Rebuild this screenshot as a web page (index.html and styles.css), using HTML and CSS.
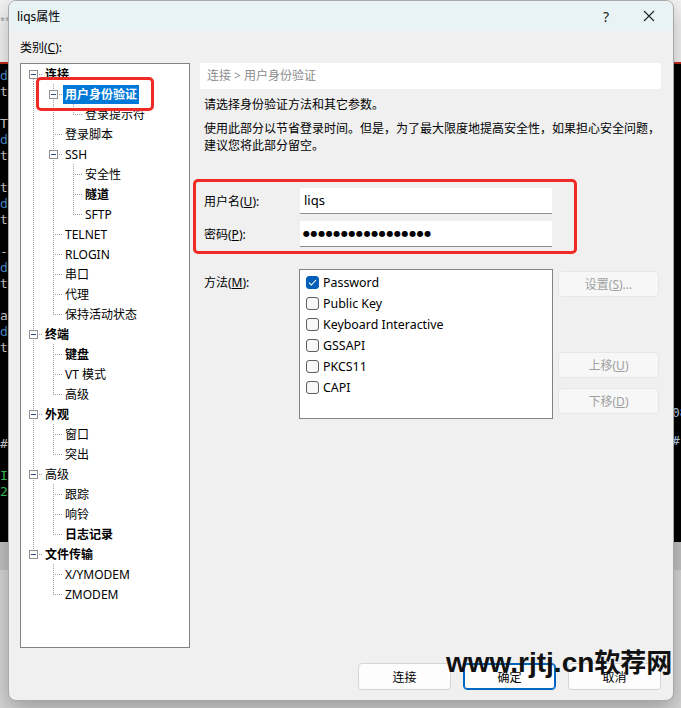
FILE: index.html
```html
<!DOCTYPE html>
<html lang="zh-CN">
<head>
<meta charset="utf-8">
<title>liqs属性</title>
<link rel="stylesheet" href="styles.css">
</head>
<body>
<div class="desktop">
  <div class="app-top"><span class="stars">**</span></div>
  <div class="terminal">
    <div class="term-left">
      <span class="tb">d</span><span class="tw">ta</span><span></span><span class="tw">T</span><span class="tb">d</span><span class="tw">ta</span><span></span><span class="tw">t</span><span class="tb">d</span><span class="tw">ta</span><span></span><span class="tw">-</span><span class="tb">d</span><span class="tw">ta</span><span></span><span class="tw">ar</span><span class="tb">d</span><span class="tw">ta</span><span></span><span></span><span></span><span></span><span></span><span class="tw">#</span><span></span><span class="tg">I</span><span class="tg">2</span>
    </div>
    <div class="term-right"><span class="ty">08</span><span class="ty">#</span></div>
  </div>
  <div class="statusbar"></div>

  <div class="dialog">
    <div class="titlebar">
      <span class="title">liqs属性</span>
      <span class="tb-btns"><span class="help">?</span><svg class="close" width="12" height="12" viewBox="0 0 12 12"><path d="M1 1L11 11M11 1L1 11" stroke="#222" stroke-width="1.1" fill="none"/></svg></span>
    </div>
    <div class="main">
      <div class="left-col">
        <div class="cat-label">类别(<u>C</u>):</div>
        <div class="tree">
          <div class="row"><span class="c x-first"><span class="box"></span></span><span class="lbl b">连接</span></div>
          <div class="row"><span class="c g-v"></span><span class="c x-mid"><span class="box"></span></span><span class="lbl b sel">用户身份验证</span></div>
          <div class="row"><span class="c g-v"></span><span class="c g-v"></span><span class="c g-l"></span><span class="lbl">登录提示符</span></div>
          <div class="row"><span class="c g-v"></span><span class="c g-t"></span><span class="lbl">登录脚本</span></div>
          <div class="row"><span class="c g-v"></span><span class="c x-mid"><span class="box"></span></span><span class="lbl">SSH</span></div>
          <div class="row"><span class="c g-v"></span><span class="c g-v"></span><span class="c g-t"></span><span class="lbl">安全性</span></div>
          <div class="row"><span class="c g-v"></span><span class="c g-v"></span><span class="c g-t"></span><span class="lbl b">隧道</span></div>
          <div class="row"><span class="c g-v"></span><span class="c g-v"></span><span class="c g-l"></span><span class="lbl">SFTP</span></div>
          <div class="row"><span class="c g-v"></span><span class="c g-t"></span><span class="lbl">TELNET</span></div>
          <div class="row"><span class="c g-v"></span><span class="c g-t"></span><span class="lbl">RLOGIN</span></div>
          <div class="row"><span class="c g-v"></span><span class="c g-t"></span><span class="lbl">串口</span></div>
          <div class="row"><span class="c g-v"></span><span class="c g-t"></span><span class="lbl">代理</span></div>
          <div class="row"><span class="c g-v"></span><span class="c g-l"></span><span class="lbl">保持活动状态</span></div>
          <div class="row"><span class="c x-mid"><span class="box"></span></span><span class="lbl b">终端</span></div>
          <div class="row"><span class="c g-v"></span><span class="c g-t"></span><span class="lbl b">键盘</span></div>
          <div class="row"><span class="c g-v"></span><span class="c g-t"></span><span class="lbl">VT 模式</span></div>
          <div class="row"><span class="c g-v"></span><span class="c g-l"></span><span class="lbl">高级</span></div>
          <div class="row"><span class="c x-mid"><span class="box"></span></span><span class="lbl b">外观</span></div>
          <div class="row"><span class="c g-v"></span><span class="c g-t"></span><span class="lbl">窗口</span></div>
          <div class="row"><span class="c g-v"></span><span class="c g-l"></span><span class="lbl">突出</span></div>
          <div class="row"><span class="c x-mid"><span class="box"></span></span><span class="lbl">高级</span></div>
          <div class="row"><span class="c g-v"></span><span class="c g-t"></span><span class="lbl">跟踪</span></div>
          <div class="row"><span class="c g-v"></span><span class="c g-t"></span><span class="lbl">响铃</span></div>
          <div class="row"><span class="c g-v"></span><span class="c g-l"></span><span class="lbl b">日志记录</span></div>
          <div class="row"><span class="c x-last"><span class="box"></span></span><span class="lbl b">文件传输</span></div>
          <div class="row"><span class="c"></span><span class="c g-t"></span><span class="lbl">X/YMODEM</span></div>
          <div class="row"><span class="c"></span><span class="c g-l"></span><span class="lbl">ZMODEM</span></div>
        </div>
      </div>
      <div class="right-col">
        <div class="crumb">连接 &gt; 用户身份验证</div>
        <p class="txt first">请选择身份验证方法和其它参数。</p>
        <p class="txt">使用此部分以节省登录时间。但是，为了最大限度地提高安全性，如果担心安全问题，<br>建议您将此部分留空。</p>
        <div class="field first-field">
          <span class="flabel">用户名(<u>U</u>):</span>
          <span class="input">liqs</span>
        </div>
        <div class="field">
          <span class="flabel">密码(<u>P</u>):</span>
          <span class="input pw">●●●●●●●●●●●●●●●●●</span>
        </div>
        <div class="method">
          <span class="flabel mlabel">方法(<u>M</u>):</span>
          <div class="listbox">
            <div class="item"><span class="chk on"><svg width="9" height="7" viewBox="0 0 9 7"><path d="M1 3.6L3.4 6L8 1" stroke="#fff" stroke-width="1.1" fill="none"/></svg></span>Password</div>
            <div class="item"><span class="chk"></span>Public Key</div>
            <div class="item"><span class="chk"></span>Keyboard Interactive</div>
            <div class="item"><span class="chk"></span>GSSAPI</div>
            <div class="item"><span class="chk"></span>PKCS11</div>
            <div class="item"><span class="chk"></span>CAPI</div>
          </div>
          <div class="side-btns">
            <span class="btn dis">设置(<u>S</u>)...</span>
            <span class="btn dis up">上移(<u>U</u>)</span>
            <span class="btn dis down">下移(<u>D</u>)</span>
          </div>
        </div>
      </div>
    </div>
    <div class="footer">
      <span class="btn fb">连接</span>
      <span class="btn fb default">确定</span>
      <span class="btn fb">取消</span>
    </div>
  </div>

  <div class="mark mark-tree"></div>
  <div class="mark mark-form"></div>
  <div class="watermark">www.rjtj.cn<span class="wcn">软荐网</span></div>
</div>
</body>
</html>
```

FILE: styles.css
```css
* { box-sizing: border-box; }
html, body { margin: 0; padding: 0; }
body {
  width: 681px;
  height: 708px;
  overflow: hidden;
  font-family: "Noto Sans", "Noto Sans CJK SC", sans-serif;
  font-size: 12px;
  color: #000;
}
.desktop {
  position: relative;
  width: 681px;
  height: 708px;
  background: #d6d6d6;
  overflow: hidden;
}
.app-top {
  position: absolute;
  left: 0; top: 0;
  width: 681px; height: 62px;
  background: #f3f3f3;
}
.stars { position: absolute; left: 0; top: 14px; color: #999; font-size: 9px; }
.terminal {
  position: absolute;
  left: 0; top: 62px;
  width: 681px; height: 480px;
  background: #000;
  border-top: 2px solid #c42b1c;
  font-family: "DejaVu Sans Mono", monospace;
  font-size: 13px;
}
.term-left {
  display: flex;
  flex-direction: column;
  padding-top: 4px;
  line-height: 16px;
}
.term-left span { height: 16px; }
.tb { color: #4d8fd6; }
.tw { color: #d0d0d0; }
.tg { color: #3cc85a; }
.term-right {
  position: absolute;
  left: 672px; top: 340px;
  display: flex; flex-direction: column; gap: 10px;
  line-height: 18px;
}
.ty { color: #b8d4ef; }
.statusbar {
  position: absolute;
  left: 0; top: 542px;
  width: 681px; height: 28px;
  background: #c2c2c2;
}

/* dialog window */
.dialog {
  position: absolute;
  left: 8px; top: 0;
  width: 666px; height: 701px;
  background: #f0f0f0;
  border: 1px solid #a8a8a8;
  border-radius: 8px;
  box-shadow: 0 8px 22px rgba(0,0,0,0.28);
  display: flex;
  flex-direction: column;
  overflow: hidden;
}
.titlebar {
  height: 30px;
  background: #e9f3f6;
  display: flex;
  align-items: center;
  justify-content: space-between;
  padding: 0 18px 0 8px;
  flex: none;
}
.title { font-size: 12px; }
.tb-btns { display: flex; align-items: center; gap: 34px; }
.help { font-size: 14px; color: #222; }
.main {
  flex: 1;
  display: flex;
  padding: 8px 11px 0 11px;
}
.left-col { width: 170px; flex: none; }
.cat-label { height: 18px; line-height: 18px; margin-bottom: 6px; }
.tree {
  width: 170px;
  height: 585px;
  background: #fff;
  border: 1px solid #838383;
  padding: 0 0 0 2px;
}
.row { display: flex; height: 20px; align-items: center; }
.c {
  width: 20px; height: 20px; flex: none;
  display: flex; align-items: center; justify-content: center;
}
.g-v { background: repeating-linear-gradient(to bottom, #a0a0a0 0 1px, transparent 1px 2px) 10px 0 / 1px 20px no-repeat; }
.g-t {
  background:
    repeating-linear-gradient(to bottom, #a0a0a0 0 1px, transparent 1px 2px) 10px 0 / 1px 20px no-repeat,
    repeating-linear-gradient(to right, #a0a0a0 0 1px, transparent 1px 2px) 12px 10px / 8px 1px no-repeat;
}
.g-l {
  background:
    repeating-linear-gradient(to bottom, #a0a0a0 0 1px, transparent 1px 2px) 10px 0 / 1px 11px no-repeat,
    repeating-linear-gradient(to right, #a0a0a0 0 1px, transparent 1px 2px) 12px 10px / 8px 1px no-repeat;
}
.x-first {
  background:
    repeating-linear-gradient(to bottom, #a0a0a0 0 1px, transparent 1px 2px) 10px 15px / 1px 5px no-repeat,
    repeating-linear-gradient(to right, #a0a0a0 0 1px, transparent 1px 2px) 16px 10px / 4px 1px no-repeat;
}
.x-mid {
  background:
    repeating-linear-gradient(to bottom, #a0a0a0 0 1px, transparent 1px 2px) 10px 0 / 1px 20px no-repeat,
    repeating-linear-gradient(to right, #a0a0a0 0 1px, transparent 1px 2px) 16px 10px / 4px 1px no-repeat;
}
.x-last {
  background:
    repeating-linear-gradient(to bottom, #a0a0a0 0 1px, transparent 1px 2px) 10px 0 / 1px 6px no-repeat,
    repeating-linear-gradient(to right, #a0a0a0 0 1px, transparent 1px 2px) 16px 10px / 4px 1px no-repeat;
}
.box {
  width: 9px; height: 9px;
  margin-left: 1px;
  border: 1px solid #909090;
  background: linear-gradient(#2c4c92, #2c4c92) center / 5px 1px no-repeat, #fdfdfd;
}
.lbl {
  padding: 0 2px;
  line-height: 19px;
  white-space: nowrap;
}
.lbl.b { font-weight: 700; }
.lbl.sel { background: #0078d7; color: #fff; }

.right-col {
  width: 461px;
  margin-left: 10px;
  margin-top: 24px;
  flex: none;
}
.crumb {
  height: 26px;
  line-height: 26px;
  background: #fff;
  padding-left: 7px;
  color: #8c8c8c;
}
.txt {
  margin: 7px 0 0 0;
  padding-left: 4px;
  line-height: 17px;
}
.field { display: flex; align-items: center; margin-top: 7px; }
.field.first-field { margin-top: 34px; }
.flabel { width: 100px; padding-left: 4px; flex: none; }
.input {
  width: 252px; height: 26px;
  background: #fff;
  border-bottom: 1px solid #8d8d8d;
  padding-left: 4px;
  line-height: 25px;
  font-size: 13px;
}
.input.pw {
  font-family: "DejaVu Sans", sans-serif;
  font-size: 8px;
  letter-spacing: 0.6px;
  padding-left: 3px;
}
.method { display: flex; align-items: flex-start; margin-top: 22px; }
.mlabel { width: 99px; padding-top: 5px; line-height: 17px; }
.listbox {
  width: 254px; height: 150px;
  background: #fff;
  border: 1px solid #838383;
  padding: 2px 0 0 6px;
  flex: none;
}
.item { display: flex; align-items: center; height: 21px; gap: 4px; font-size: 12.4px; }
.chk {
  width: 13px; height: 13px;
  border: 1px solid #5d5d5d;
  border-radius: 3px;
  background: #f8f8f8;
  display: flex; align-items: center; justify-content: center;
  flex: none;
}
.chk.on { background: #005fb8; border-color: #005fb8; }
.side-btns { display: flex; flex-direction: column; margin-left: 5px; padding-top: 2px; }
.btn {
  display: flex; align-items: center; justify-content: center;
  height: 26px;
  border: 1px solid #d5d5d5;
  border-radius: 4px;
  background: #fdfdfd;
}
.btn.dis { width: 101px; background: #f7f7f7; border-color: #e6e6e6; color: #a0a0a0; }
.btn.up { margin-top: 55px; }
.btn.down { margin-top: 10px; }
.footer {
  display: flex;
  justify-content: flex-end;
  gap: 12px;
  padding: 0 12px 10px 0;
  flex: none;
}
.btn.fb { width: 93px; height: 27px; }
.btn.default { border: 1px solid #0067c0; box-shadow: inset 0 0 0 1px #0067c0; }

.mark {
  position: absolute;
  border: 3px solid #f02a25;
  border-radius: 5px;
}
.mark-tree { left: 36px; top: 77px; width: 118px; height: 34px; }
.mark-form { left: 193px; top: 179px; width: 384px; height: 75px; }
.watermark {
  position: absolute;
  left: 446px; top: 646px;
  font-family: "Liberation Sans", Arial, sans-serif;
  font-weight: 700;
  font-size: 28px;
  line-height: 30px;
  color: #111;
  white-space: nowrap;
}
.wcn { font-family: "Noto Sans CJK SC", sans-serif; font-size: 26px; }
```
